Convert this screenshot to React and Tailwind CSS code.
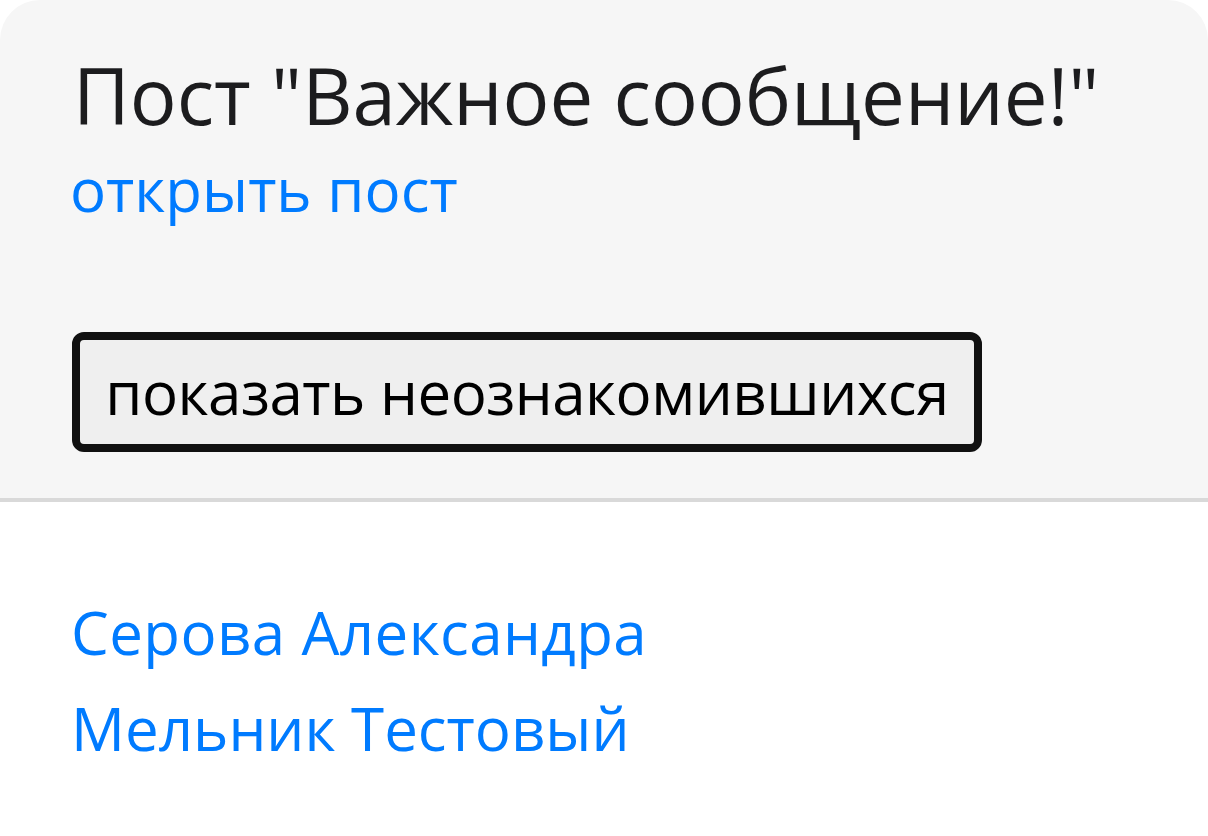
export default function App() {
  const font = { fontFamily: '"Open Sans", "Noto Sans", sans-serif' };
  return (
    <div className="w-[1208px] h-[836px] bg-white overflow-hidden" style={font}>
      <div className="bg-[#f6f6f6] rounded-t-[40px] border-b-[4px] border-[#d9d9d9] pl-[70px] pt-[57px] pb-[46px]">
        <div className="ml-[3px] text-[78px] leading-[77px] text-[#1c1c1e] whitespace-nowrap">Пост "Важное сообщение!"</div>
        <a href="#" className="block mt-[25px] text-[60px] leading-[60px] text-[#007bff] w-fit">открыть пост</a>
        <button className="mt-[113px] ml-[2px] w-[910px] h-[120px] flex items-center justify-center bg-[#efefef] border-[8px] border-[#111111] rounded-[12px] text-[60px] leading-[60px] tracking-[-0.5px] text-black whitespace-nowrap">
          показать неознакомившихся
        </button>
      </div>
      <div className="pl-[71px] pt-[82px] flex flex-col">
        <a href="#" className="text-[60px] leading-[96px] tracking-[0.4px] text-[#007bff] w-fit">Серова Александра</a>
        <a href="#" className="text-[60px] leading-[96px] text-[#007bff] w-fit">Мельник Тестовый</a>
      </div>
    </div>
  );
}
